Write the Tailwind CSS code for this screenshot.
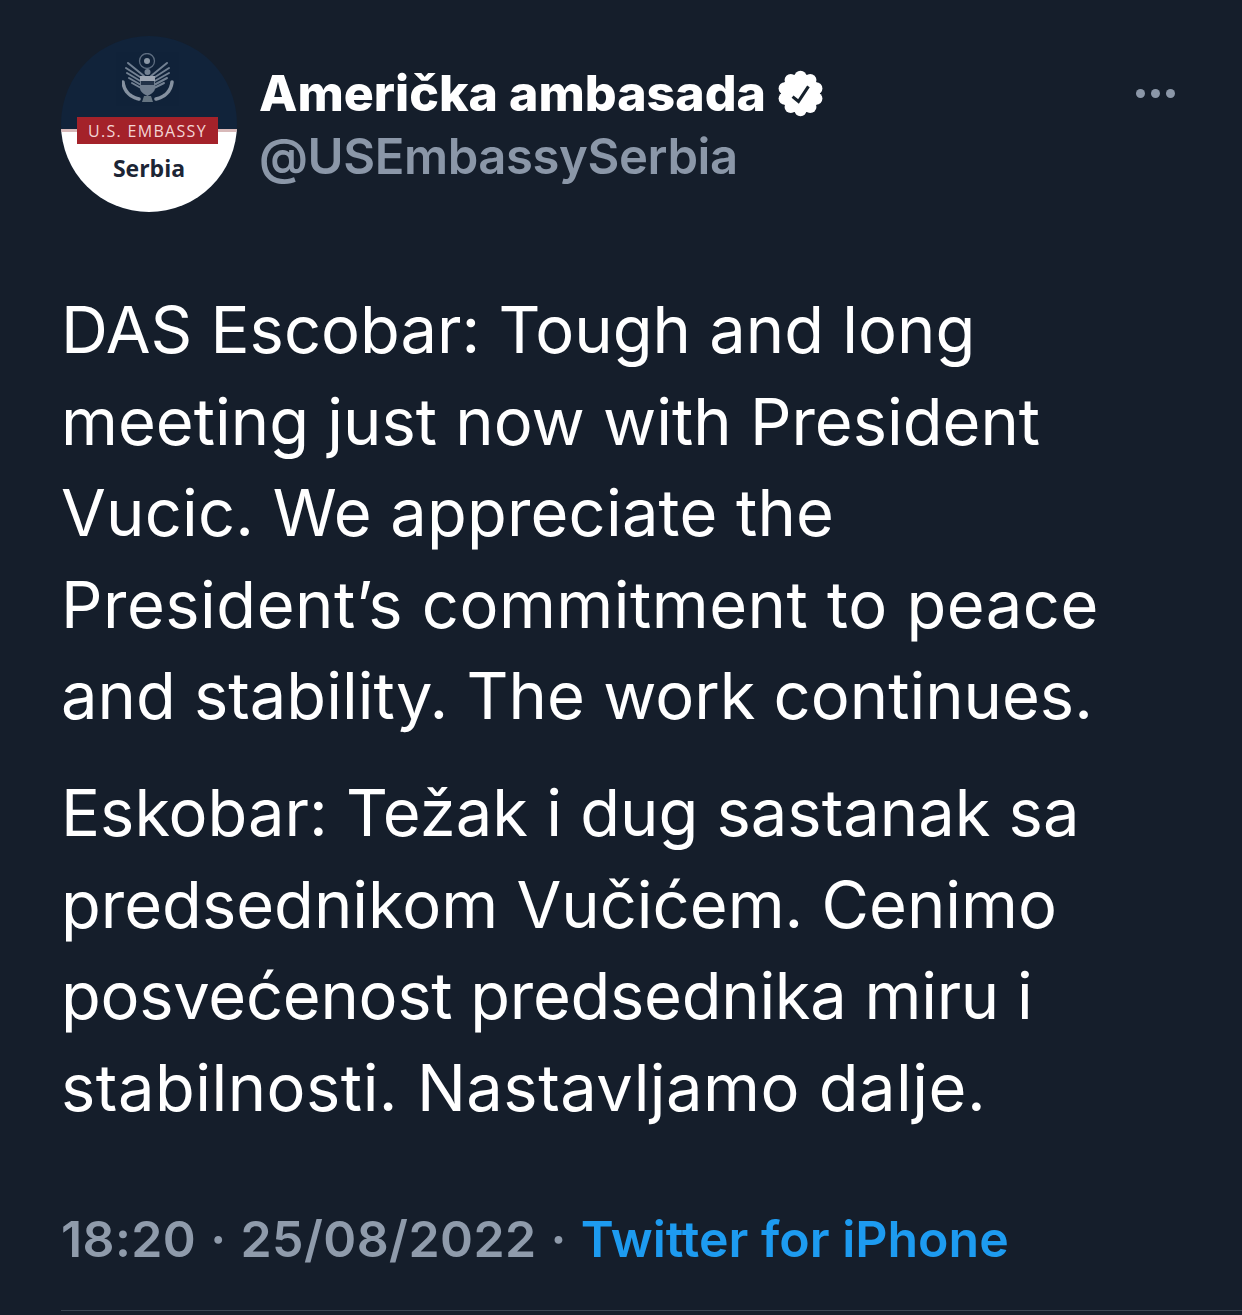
<!DOCTYPE html>
<html lang="en">
<head>
    <meta charset="UTF-8">
    <title>Tweet</title>
    <script src="https://cdn.jsdelivr.net/npm/@tailwindcss/browser@4"></script>
</head>
<body class="bg-[#151e2b] font-['Inter',sans-serif] text-white w-[1242px] h-[1315px] overflow-hidden">
    <div class="pl-[61px] pt-[36px]">
        <!-- Header -->
        <div class="flex items-start">
            <div class="relative w-[176px] h-[176px] rounded-full overflow-hidden bg-[#11233a] shrink-0">
                <!-- Embassy seal -->
                <svg class="absolute left-[61px] top-[17px] w-[52px] h-[50px] opacity-85" viewBox="0 0 52 50" fill="none" stroke="#8592a3" stroke-width="2" stroke-linecap="round">
                    <circle cx="25" cy="8" r="7.5" stroke="#6c7a8d" stroke-width="1.3"/>
                    <circle cx="25" cy="8" r="3" fill="#a3adba" stroke="none"/>
                    <path d="M22 23L6 10M21 26L4 15M20 29L5 20M19 32L7 25M19 35L10 30"/>
                    <path d="M29 23L45 10M30 26L47 15M31 29L47 20M32 32L45 25M32 35L42 30"/>
                    <path d="M1 29C2 38 8 44 17 46M50 29C49 38 43 44 34 46" stroke-width="3.500" stroke-dasharray="2 1" stroke="#9aa5b3"/>
                    <circle cx="25.500" cy="19" r="3" fill="#8592a3" stroke="none"/>
                    <path d="M18 23h15v12c0 4-4 6-7.500 8-3.500-2-7.500-4-7.500-8z" fill="#7f8c9d" stroke="none"/>
                    <path d="M18 23h15v5H18z" fill="#b5bdc8" stroke="none"/>
                    <path d="M19 28h13v4H19z" fill="#26364c" stroke="none"/>
                    <path d="M22 43h7l2 6H20z" fill="#75838f" stroke="none"/>
                </svg>
                <div class="absolute left-0 right-0 top-[93px] bottom-0 bg-white border-t-[3px] border-[#d8b9b9]"></div>
                <div class="absolute left-[16px] top-[81px] w-[141px] h-[27px] bg-[#a4222a] text-[#f3d5d5] text-[16px] tracking-[1.3px] font-['Open_Sans',sans-serif] flex items-center justify-center">U.S. EMBASSY</div>
                <div class="absolute left-0 right-0 top-[117px] text-center text-[#1c2535] text-[23px] font-bold font-['Open_Sans',sans-serif] leading-[30px]">Serbia</div>
            </div>
            <div class="ml-[22px] pt-[26px] flex-1">
                <div class="flex items-center h-[62px] mb-[2px]">
                    <span class="text-[50px] font-extrabold leading-none">Američka ambasada</span>
                    <svg class="w-[53px] h-[53px] ml-[8px]" viewBox="0 0 24 24" fill="#fff">
                        <circle cx="12" cy="12" r="8.800"/>
                        <circle cx="12" cy="4.500" r="2.800"/>
                        <circle cx="16.410" cy="5.930" r="2.800"/>
                        <circle cx="19.130" cy="9.680" r="2.800"/>
                        <circle cx="19.130" cy="14.320" r="2.800"/>
                        <circle cx="16.410" cy="18.070" r="2.800"/>
                        <circle cx="12" cy="19.500" r="2.800"/>
                        <circle cx="7.590" cy="18.070" r="2.800"/>
                        <circle cx="4.870" cy="14.320" r="2.800"/>
                        <circle cx="4.870" cy="9.680" r="2.800"/>
                        <circle cx="7.590" cy="5.930" r="2.800"/>
                        <path d="M8.400 13.400l2.700 2.200 4.500-6.800" fill="none" stroke="#15202b" stroke-width="1.400"/>
                    </svg>
                </div>
                <div class="text-[49px] font-semibold leading-[62px] text-[#8b97a8] tracking-[-0.4px]">@USEmbassySerbia</div>
            </div>
            <div class="flex gap-[6px] mt-[53px] mr-[67px]">
                <span class="w-[9px] h-[9px] rounded-full bg-[#8b97a8]"></span>
                <span class="w-[9px] h-[9px] rounded-full bg-[#8b97a8]"></span>
                <span class="w-[9px] h-[9px] rounded-full bg-[#8b97a8]"></span>
            </div>
        </div>

        <!-- Tweet text -->
        <div class="mt-[72px] text-[65px] leading-[91.6px] whitespace-nowrap">
            <p>DAS Escobar: Tough and long</p>
            <p>meeting just now with President</p>
            <p class="tracking-[0.2px]">Vucic. We appreciate the</p>
            <p class="tracking-[0.5px]">President’s commitment to peace</p>
            <p>and stability. The work continues.</p>
            <p class="mt-[25px]">Eskobar: Težak i dug sastanak sa</p>
            <p>predsednikom Vučićem. Cenimo</p>
            <p class="tracking-[-0.27px]">posvećenost predsednika miru i</p>
            <p class="tracking-[0.5px]">stabilnosti. Nastavljamo dalje.</p>
        </div>

        <!-- Meta -->
        <div class="mt-[76px] flex text-[50px] font-semibold leading-[60px] whitespace-pre text-[#8f9bab]">
            <span class="tracking-[0.4px] [word-spacing:1px]">18:20 · 25/08/2022 · </span><span class="text-[#1d9bf0]">Twitter for iPhone</span>
        </div>
        <div class="mt-[41px] h-[1px] bg-[#3a4552]"></div>
    </div>
</body>
</html>
